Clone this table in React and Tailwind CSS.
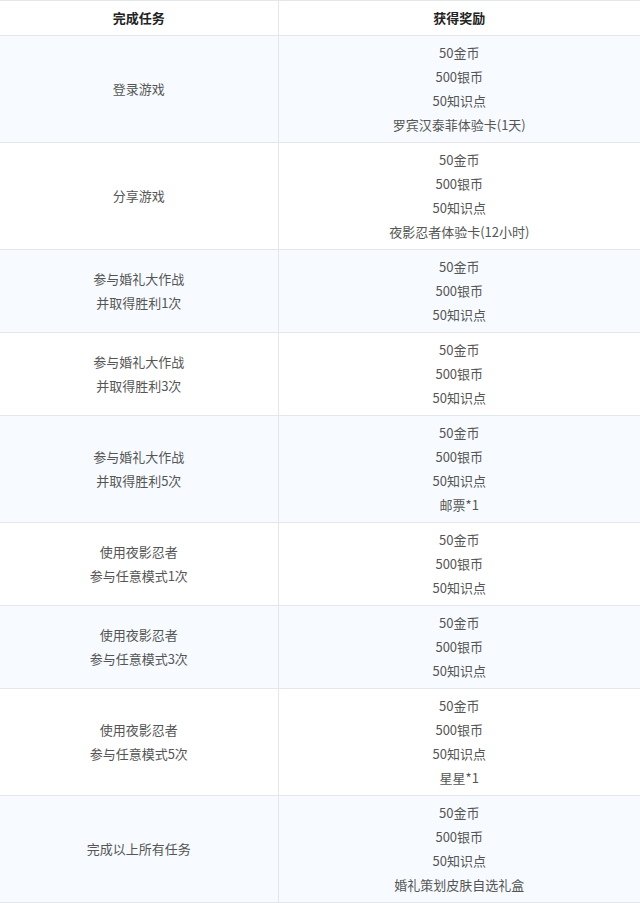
import React from "react";

const rows = [
  { task: ["登录游戏"], reward: ["50金币", "500银币", "50知识点", "罗宾汉泰菲体验卡(1天)"] },
  { task: ["分享游戏"], reward: ["50金币", "500银币", "50知识点", "夜影忍者体验卡(12小时)"] },
  { task: ["参与婚礼大作战", "并取得胜利1次"], reward: ["50金币", "500银币", "50知识点"] },
  { task: ["参与婚礼大作战", "并取得胜利3次"], reward: ["50金币", "500银币", "50知识点"] },
  { task: ["参与婚礼大作战", "并取得胜利5次"], reward: ["50金币", "500银币", "50知识点", "邮票*1"] },
  { task: ["使用夜影忍者", "参与任意模式1次"], reward: ["50金币", "500银币", "50知识点"] },
  { task: ["使用夜影忍者", "参与任意模式3次"], reward: ["50金币", "500银币", "50知识点"] },
  { task: ["使用夜影忍者", "参与任意模式5次"], reward: ["50金币", "500银币", "50知识点", "星星*1"] },
  { task: ["完成以上所有任务"], reward: ["50金币", "500银币", "50知识点", "婚礼策划皮肤自选礼盒"] },
];

export default function App() {
  return (
    <div
      className="w-[640px] bg-white"
      style={{ fontFamily: '"Noto Sans CJK SC", "Noto Sans", sans-serif' }}
    >
      <table className="w-full border-collapse text-[13px] text-center">
        <thead>
          <tr className="bg-white">
            <th className="w-[278px] h-[35px] border border-[#e3e6ea] border-l-0 font-bold text-[#222] p-0">完成任务</th>
            <th className="h-[35px] border border-[#e3e6ea] border-r-0 font-bold text-[#222] p-0">获得奖励</th>
          </tr>
        </thead>
        <tbody>
          {rows.map((r, i) => (
            <tr key={i} className={i % 2 === 0 ? "bg-[#f7fbff]" : "bg-white"}>
              <td className="border border-[#e3e6ea] border-l-0 py-[5px] px-2 text-[#555] leading-[24px]">
                {r.task.map((t, j) => (
                  <div key={j}>{t}</div>
                ))}
              </td>
              <td className="border border-[#e3e6ea] border-r-0 py-[5px] px-2 text-[#555] leading-[24px]">
                {r.reward.map((t, j) => (
                  <div key={j}>{t}</div>
                ))}
              </td>
            </tr>
          ))}
        </tbody>
      </table>
    </div>
  );
}
